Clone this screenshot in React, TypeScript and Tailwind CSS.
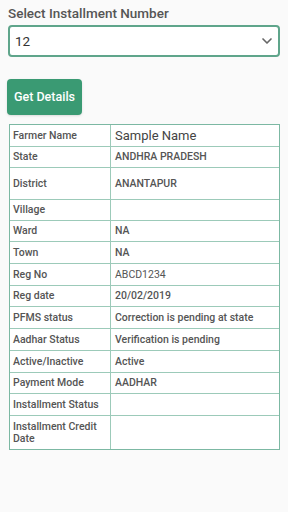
import { ChevronDown } from "lucide-react";

const ROWS: { label: string; value: string; h: string; big?: boolean; bold?: boolean }[] = [
  { label: "Farmer Name", value: "Sample Name", h: "h-[22px]", big: true },
  { label: "State", value: "ANDHRA PRADESH", h: "h-[21px]", bold: true },
  { label: "District", value: "ANANTAPUR", h: "h-[32px]", bold: true },
  { label: "Village", value: "", h: "h-[21px]" },
  { label: "Ward", value: "NA", h: "h-[21px]", bold: true },
  { label: "Town", value: "NA", h: "h-[22px]", bold: true },
  { label: "Reg No", value: "ABCD1234", h: "h-[22px]" },
  { label: "Reg date", value: "20/02/2019", h: "h-[21px]", bold: true },
  { label: "PFMS status", value: "Correction is pending at state", h: "h-[22px]", bold: true },
  { label: "Aadhar Status", value: "Verification is pending", h: "h-[22px]", bold: true },
  { label: "Active/Inactive", value: "Active", h: "h-[22px]", bold: true },
  { label: "Payment Mode", value: "AADHAR", h: "h-[21px]", bold: true },
  { label: "Installment Status", value: "", h: "h-[22px]" },
  { label: "Installment Credit Date", value: "", h: "h-[33px]" },
];

export default function App() {
  return (
    <div className="min-h-[512px] w-[288px] bg-[#fafafa] font-['Roboto',sans-serif] text-[#555]">
      <div className="px-2 pt-[4px]">
        <h1 className="text-[13.5px] font-medium leading-[18px] text-[#555]">Select Installment Number</h1>
        <div className="mt-[3px] flex h-[32px] items-center justify-between rounded-[4px] border-2 border-[#5fa58b] bg-white pl-[5px] pr-[3px]">
          <span className="text-[13.5px] text-[#333]">12</span>
          <ChevronDown className="h-[16px] w-[16px] text-[#666]" strokeWidth={2.5} />
        </div>
        <button className="mt-[22px] ml-[-1px] flex h-[36px] w-[75px] items-center justify-center rounded-[4px] bg-[#3a9a73] text-[12.5px] font-medium text-white shadow-sm">
          Get Details
        </button>
        <div className="mt-[9px] ml-[1px] w-[271px] border-[1.5px] border-[#7cb8a3] bg-white">
          {ROWS.map((r, i) => (
            <div
              key={r.label}
              className={`flex ${r.h} ${i < ROWS.length - 1 ? "border-b-[1.5px] border-[#9ccab9]" : ""}`}
            >
              <div className="flex w-[101px] shrink-0 items-center border-r-[1.5px] border-[#9ccab9] px-[3px] text-[10.5px] font-medium leading-[12px] text-[#555]">
                {r.label}
              </div>
              <div
                className={`flex flex-1 items-center px-[4px] ${
                  r.big ? "text-[13px] text-[#444]" : `text-[10.5px] text-[#555] ${r.bold ? "font-medium" : ""}`
                }`}
              >
                {r.value}
              </div>
            </div>
          ))}
        </div>
      </div>
    </div>
  );
}
